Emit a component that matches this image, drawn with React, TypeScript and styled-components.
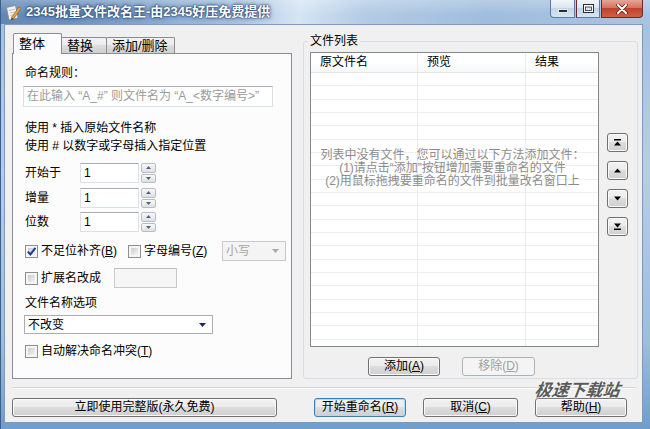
import React from 'react'
import styled, { createGlobalStyle } from 'styled-components'

const font = `'Liberation Sans', 'Noto Sans CJK SC', sans-serif`

const colors = {
  face: '#f0f0f0',
  panel: '#fcfcfc',
  tabBorder: '#898c95',
  button: '#707070',
  field: '#abadb3',
  hint: '#8c8c8c'
}

const buttonFace =
  'linear-gradient(180deg, #f2f2f2 0%, #ebebeb 49%, #dddddd 50%, #cfcfcf 100%)'

const GlobalStyle = createGlobalStyle`
  html, body {
    margin: 0;
    padding: 0;
    overflow: hidden;
    background: #ffffff;
  }
  * {
    box-sizing: border-box;
  }
`

const Window = styled.div`
  width: 650px;
  height: 429px;
  display: flex;
  flex-direction: column;
  font-family: ${font};
  font-size: 12px;
  color: #000;
  background: linear-gradient(180deg, #a3c0e0 0%, #b6cde7 40%, #9dbcdf 80%, #6f9dcc 100%);
  border-left: 1px solid #3d6089;
`

const TitleBar = styled.div`
  height: 24px;
  flex: none;
  display: flex;
  align-items: flex-start;
  background:
    linear-gradient(180deg, rgba(255, 255, 255, 0.25), rgba(255, 255, 255, 0) 60%),
    linear-gradient(100deg, #5f86b6 0%, #7b9fc9 18%, #a6c2e1 36%, #d6e5f3 46%, #b3cbe5 56%, #a0bddd 75%, #a9c4e1 100%);
`

const AppIcon = styled.svg`
  flex: none;
  margin: 4px 0 0 4px;
`

const TitleText = styled.div`
  margin: 4px 0 0 5px;
  font-weight: bold;
  font-size: 13px;
  line-height: 16px;
  color: #ffffff;
  text-shadow: 0 0 2px #1c3a63, 0 0 5px #27497a, 0 0 1px #14304f;
`

const CaptionGroup = styled.div`
  margin-left: auto;
  margin-right: 7px;
  display: flex;
`

const CaptionButton = styled.div<{ $w: number; $close?: boolean; $round?: string }>`
  width: ${p => p.$w}px;
  height: 18px;
  display: flex;
  align-items: center;
  justify-content: center;
  border: 1px solid ${p => (p.$close ? '#6b2a22' : '#5a7aa3')};
  border-top: none;
  border-radius: ${p => p.$round || '0'};
  background: ${p =>
    p.$close
      ? 'linear-gradient(180deg, #e6a597 0%, #d6735e 45%, #be442d 50%, #cf5f44 100%)'
      : 'linear-gradient(180deg, #f1f5fa 0%, #dbe6f2 45%, #c3d5e9 50%, #d8e5f2 100%)'};
  & + & {
    margin-left: ${p => (p.$close ? 1 : 0)}px;
    border-left: ${p => (p.$close ? '1px solid #6b2a22' : 'none')};
  }
`

const Client = styled.div`
  position: relative;
  flex: 1;
  margin: 0 7px 6px 3px;
  background: ${colors.face};
  border: 1px solid #7d99bb;
  display: flex;
  flex-direction: column;
`

const MainRow = styled.div`
  height: 354px;
  flex: none;
  display: flex;
  gap: 11px;
  padding: 8px 0 0 7px;
`

const LeftPane = styled.div`
  width: 280px;
  display: flex;
  flex-direction: column;
`

const TabStrip = styled.div`
  height: 20px;
  flex: none;
  display: flex;
  align-items: flex-end;
  padding-left: 1px;
`

const Tab = styled.div<{ $active?: boolean; $w: number }>`
  position: relative;
  width: ${p => p.$w}px;
  height: ${p => (p.$active ? 21 : 16)}px;
  margin-bottom: ${p => (p.$active ? -1 : 0)}px;
  margin-left: ${p => (p.$active ? 0 : -1)}px;
  z-index: ${p => (p.$active ? 1 : 0)};
  padding-left: 5px;
  border: 1px solid ${colors.tabBorder};
  border-bottom: none;
  border-radius: 2px 2px 0 0;
  background: ${p => (p.$active ? colors.panel : buttonFace)};
  font-size: 13px;
  line-height: ${p => (p.$active ? 19 : 15)}px;
  white-space: nowrap;
`

const TabPanel = styled.div`
  flex: 1;
  border: 1px solid ${colors.tabBorder};
  background: ${colors.panel};
  padding: 12px 0 0 12px;
  display: flex;
  flex-direction: column;
`

const TextLine = styled.div<{ $mt?: number }>`
  margin-top: ${p => p.$mt || 0}px;
  height: 14px;
  line-height: 14px;
  white-space: nowrap;
`

const TextField = styled.div<{ $w: number; $h?: number; $mt?: number; $ml?: number; $disabled?: boolean }>`
  flex: none;
  width: ${p => p.$w}px;
  height: ${p => p.$h || 20}px;
  margin-top: ${p => p.$mt || 0}px;
  margin-left: ${p => p.$ml || 0}px;
  padding-left: 3px;
  border: 1px solid ${p => (p.$disabled ? '#c9c9c9' : '#dbdfe6')};
  border-top-color: ${p => (p.$disabled ? '#bdbdbd' : colors.field)};
  background: ${p => (p.$disabled ? '#f6f6f6' : '#ffffff')};
  color: ${p => (p.$disabled ? '#a0a0a0' : '#000')};
  line-height: ${p => (p.$h || 20) - 2}px;
  white-space: nowrap;
  overflow: hidden;
`

const Placeholder = styled.span`
  color: #9a9a9a;
`

const Row = styled.div<{ $mt?: number; $h?: number }>`
  margin-top: ${p => p.$mt || 0}px;
  height: ${p => p.$h || 20}px;
  display: flex;
  align-items: center;
`

const FieldLabel = styled.div`
  width: 55px;
  line-height: 14px;
`

const Spinner = styled.div`
  width: 15px;
  height: 20px;
  margin-left: 2px;
  display: flex;
  flex-direction: column;
  gap: 1px;
`

const SpinButton = styled.div`
  flex: 1;
  display: flex;
  align-items: center;
  justify-content: center;
  border: 1px solid #b9bec6;
  border-radius: 2px;
  background: linear-gradient(180deg, #f8f8f8, #dfe1e4);
`

const CheckItem = styled.label<{ $w?: number }>`
  width: ${p => (p.$w ? `${p.$w}px` : 'auto')};
  flex: none;
  display: flex;
  align-items: center;
  line-height: 14px;
  white-space: nowrap;
`

const CheckBox = styled.span`
  width: 13px;
  height: 13px;
  margin-right: 3px;
  flex: none;
  display: flex;
  align-items: center;
  justify-content: center;
  border: 1px solid #8e8f8f;
  padding: 2px;
  background: linear-gradient(135deg, #c9ccd1, #f4f4f4) content-box, #f6f6f6;
`

const Key = styled.span`
  text-decoration: underline;
`

const Select = styled.div<{ $w: number; $h?: number; $mt?: number; $ml?: number; $disabled?: boolean }>`
  width: ${p => p.$w}px;
  height: ${p => p.$h || 20}px;
  margin-top: ${p => p.$mt || 0}px;
  margin-left: ${p => p.$ml || 0}px;
  flex: none;
  display: flex;
  align-items: center;
  justify-content: space-between;
  padding: 0 6px 0 3px;
  border: 1px solid ${p => (p.$disabled ? '#c9c9c9' : colors.field)};
  background: ${p => (p.$disabled ? '#f4f4f4' : '#ffffff')};
  color: ${p => (p.$disabled ? '#a6a6a6' : '#000')};
  line-height: 14px;
`

const Group = styled.fieldset`
  margin: 1px 0 0 0;
  padding: 0;
  width: 335px;
  height: 345px;
  min-width: 0;
  border: 1px solid #d5dfe5;
  border-radius: 3px;
`

const GroupTitle = styled.legend`
  margin-left: 4px;
  padding: 0 2px;
  font-size: 12px;
  line-height: 14px;
`

const GroupBody = styled.div`
  padding: 4px 0 0 6px;
  display: flex;
  flex-direction: column;
`

const ListRow = styled.div`
  display: flex;
  gap: 8px;
`

const ListView = styled.div`
  position: relative;
  width: 289px;
  height: 295px;
  border: 1px solid #828790;
  background: #ffffff;
  display: flex;
  flex-direction: column;
`

const ListHeader = styled.div`
  height: 20px;
  flex: none;
  display: flex;
  border-bottom: 1px solid #e5e5e5;
  background: linear-gradient(180deg, #ffffff 0%, #ffffff 50%, #f6f7f9 100%);
`

const Column = styled.div<{ $w?: number }>`
  width: ${p => (p.$w ? `${p.$w}px` : 'auto')};
  flex: ${p => (p.$w ? 'none' : 1)};
  border-right: 1px solid ${p => (p.$w ? '#e8ebef' : 'transparent')};
`

const HeaderCell = styled(Column)`
  padding-left: 9px;
  line-height: 19px;
`

const ListBody = styled.div`
  flex: 1;
  display: flex;
  background: repeating-linear-gradient(
    180deg,
    transparent 0,
    transparent 12.33px,
    #eeeeee 12.33px,
    #eeeeee 13.33px
  );
`

const EmptyNote = styled.div`
  position: absolute;
  top: 96px;
  left: 0;
  right: 0;
  padding-right: 4px;
  text-align: center;
  color: ${colors.hint};
  line-height: 13px;
  white-space: nowrap;
`

const ArrowColumn = styled.div`
  padding-top: 81px;
  display: flex;
  flex-direction: column;
  gap: 9px;
`

const ArrowButton = styled.div`
  width: 21px;
  height: 19px;
  display: flex;
  align-items: center;
  justify-content: center;
  border: 1px solid ${colors.button};
  border-radius: 3px;
  background: ${buttonFace};
  box-shadow: inset 0 0 0 1px #fbfbfb;
`

const GroupButtons = styled.div`
  margin-top: 10px;
  padding-left: 58px;
  display: flex;
  gap: 22px;
`

const Button = styled.button<{ $w: number; $default?: boolean }>`
  width: ${p => p.$w}px;
  height: 19px;
  padding: 0;
  font-family: ${font};
  font-size: 12px;
  line-height: 17px;
  color: #000;
  border: 1px solid ${p => (p.$default ? '#3c7fb1' : colors.button)};
  border-radius: 3px;
  background: ${buttonFace};
  box-shadow: inset 0 0 0 1px ${p => (p.$default ? '#a9dcf5' : '#fbfbfb')};
  white-space: nowrap;
  &:disabled {
    color: #a0a0a0;
    border-color: #adb2b5;
    background: #f4f4f4;
    box-shadow: none;
  }
`

const Separator = styled.div`
  margin: 8px 6px 0 7px;
  height: 2px;
  border-top: 1px solid #d5d5d5;
  border-bottom: 1px solid #ffffff;
`

const BottomBar = styled.div`
  margin-top: 9px;
  padding: 0 15px 0 7px;
  display: flex;
  justify-content: space-between;
`

const BottomRight = styled.div`
  display: flex;
  gap: 17px;
`

const Watermark = styled.div`
  position: absolute;
  left: 530px;
  top: 354px;
  font-family: 'Noto Sans CJK SC', sans-serif;
  font-size: 17px;
  font-weight: bold;
  font-style: italic;
  line-height: 20px;
  color: #5a5a5a;
  text-shadow: 0 0 2px #ffffff, 0 0 2px #ffffff;
  transform: skewX(-8deg);
`

const TriUp = () => (
  <svg width="5" height="3" viewBox="0 0 5 3">
    <polygon points="2.5,0 5,3 0,3" fill="#4d6185" />
  </svg>
)

const TriDown = () => (
  <svg width="5" height="3" viewBox="0 0 5 3">
    <polygon points="0,0 5,0 2.5,3" fill="#4d6185" />
  </svg>
)

const SpinBox: React.FC<{ label: string }> = ({ label }) => (
  <>
    <FieldLabel>{label}</FieldLabel>
    <TextField $w={59}>1</TextField>
    <Spinner>
      <SpinButton>
        <TriUp />
      </SpinButton>
      <SpinButton>
        <TriDown />
      </SpinButton>
    </Spinner>
  </>
)

const Check: React.FC<{ checked?: boolean; w?: number; children: React.ReactNode }> = ({
  checked,
  w,
  children
}) => (
  <CheckItem $w={w}>
    <CheckBox>
      {checked && (
        <svg width="9" height="9" viewBox="0 0 9 9" style={{ overflow: 'visible' }}>
          <path d="M0.8 4.6 L3.4 7.4 L8.4 0.8" stroke="#1b3f8f" strokeWidth="2" fill="none" />
        </svg>
      )}
    </CheckBox>
    {children}
  </CheckItem>
)

const DropArrow: React.FC<{ color: string }> = ({ color }) => (
  <svg width="7" height="4" viewBox="0 0 7 4">
    <polygon points="0,0 7,0 3.5,4" fill={color} />
  </svg>
)

const MoveIcon: React.FC<{ kind: 'top' | 'up' | 'down' | 'bottom' }> = ({ kind }) => (
  <svg width="9" height="9" viewBox="0 0 9 9">
    {kind === 'top' && (
      <>
        <rect x="1" y="1" width="7" height="1.5" fill="#000" />
        <polygon points="4.5,3.5 8,7.5 1,7.5" fill="#000" />
      </>
    )}
    {kind === 'up' && <polygon points="4.5,2.5 8,6.5 1,6.5" fill="#000" />}
    {kind === 'down' && <polygon points="1,2.5 8,2.5 4.5,6.5" fill="#000" />}
    {kind === 'bottom' && (
      <>
        <polygon points="1,1.5 8,1.5 4.5,5.5" fill="#000" />
        <rect x="1" y="6.5" width="7" height="1.5" fill="#000" />
      </>
    )}
  </svg>
)

const App: React.FC = () => (
  <>
    <GlobalStyle />
    <Window>
      <TitleBar>
        <AppIcon width="16" height="17" viewBox="0 0 16 17">
          <path d="M1.5 3.5 L10.5 1.5 L13 14 L4 16 Z" fill="#f6f6f6" stroke="#7f8793" strokeWidth="0.8" />
          <path d="M4 6.5 L10 5.2 M4.6 9 L10.6 7.7 M5.2 11.5 L11.2 10.2" stroke="#a9b3c2" strokeWidth="0.8" />
          <path d="M6.5 13.5 L14 3 L16 4.5 L8.5 15 Z" fill="#e9a338" stroke="#8e5312" strokeWidth="0.6" />
          <path d="M6.5 13.5 L8.5 15 L6 16.5 Z" fill="#3a3a3a" />
        </AppIcon>
        <TitleText>2345批量文件改名王-由2345好压免费提供</TitleText>
        <CaptionGroup>
          <CaptionButton $w={25} $round="0 0 0 4px">
            <svg width="10" height="8" viewBox="0 0 10 8">
              <rect x="0.5" y="4.5" width="9" height="3" fill="#2b2b2b" stroke="#ffffff" strokeWidth="0.8" />
            </svg>
          </CaptionButton>
          <CaptionButton $w={24}>
            <svg width="11" height="9" viewBox="0 0 11 9">
              <rect x="0.5" y="0.5" width="10" height="8" fill="#ffffff" stroke="#2b2b2b" strokeWidth="1" />
              <rect x="2.5" y="3" width="6" height="3.5" fill="#dce6f1" stroke="#2b2b2b" strokeWidth="0.8" />
            </svg>
          </CaptionButton>
          <CaptionButton $w={42} $close $round="0 0 4px 0">
            <svg width="12" height="10" viewBox="0 0 12 10">
              <path d="M2 1 L10 9 M10 1 L2 9" stroke="#5a1a12" strokeWidth="3.4" strokeLinecap="round" />
              <path d="M2 1 L10 9 M10 1 L2 9" stroke="#ffffff" strokeWidth="2" strokeLinecap="round" />
            </svg>
          </CaptionButton>
        </CaptionGroup>
      </TitleBar>

      <Client>
        <MainRow>
          <LeftPane>
            <TabStrip>
              <Tab $active $w={49}>整体</Tab>
              <Tab $w={46}>替换</Tab>
              <Tab $w={69}>添加/删除</Tab>
            </TabStrip>
            <TabPanel>
              <TextLine>命名规则：</TextLine>
              <TextField $w={250} $h={21} $mt={6} $ml={-2}>
                <Placeholder>在此输入 “A_#” 则文件名为 “A_&lt;数字编号&gt;”</Placeholder>
              </TextField>
              <TextLine $mt={14}>使用 * 插入原始文件名称</TextLine>
              <TextLine $mt={4}>使用 # 以数字或字母插入指定位置</TextLine>
              <Row $mt={10}>
                <SpinBox label="开始于" />
              </Row>
              <Row $mt={5}>
                <SpinBox label="增量" />
              </Row>
              <Row $mt={4}>
                <SpinBox label="位数" />
              </Row>
              <Row $mt={9}>
                <Check checked w={103}>
                  不足位补齐(<Key>B</Key>)
                </Check>
                <Check w={94}>
                  字母编号(<Key>Z</Key>)
                </Check>
                <Select $w={64} $disabled>
                  小写
                  <DropArrow color="#a9a9a9" />
                </Select>
              </Row>
              <Row $mt={7}>
                <Check w={89}>扩展名改成</Check>
                <TextField $w={63} $disabled />
              </Row>
              <TextLine $mt={8}>文件名称选项</TextLine>
              <Select $w={189} $h={19} $mt={5} $ml={-1}>
                不改变
                <DropArrow color="#1d2b5c" />
              </Select>
              <Row $mt={10} $h={14}>
                <Check>
                  自动解决命名冲突(<Key>T</Key>)
                </Check>
              </Row>
            </TabPanel>
          </LeftPane>

          <Group>
            <GroupTitle>文件列表</GroupTitle>
            <GroupBody>
              <ListRow>
                <ListView>
                  <ListHeader>
                    <HeaderCell $w={107}>原文件名</HeaderCell>
                    <HeaderCell $w={108}>预览</HeaderCell>
                    <HeaderCell>结果</HeaderCell>
                  </ListHeader>
                  <ListBody>
                    <Column $w={107} />
                    <Column $w={108} />
                    <Column />
                  </ListBody>
                  <EmptyNote>
                    列表中没有文件，您可以通过以下方法添加文件：
                    <br />
                    (1)请点击“添加”按钮增加需要重命名的文件
                    <br />
                    (2)用鼠标拖拽要重命名的文件到批量改名窗口上
                  </EmptyNote>
                </ListView>
                <ArrowColumn>
                  <ArrowButton>
                    <MoveIcon kind="top" />
                  </ArrowButton>
                  <ArrowButton>
                    <MoveIcon kind="up" />
                  </ArrowButton>
                  <ArrowButton>
                    <MoveIcon kind="down" />
                  </ArrowButton>
                  <ArrowButton>
                    <MoveIcon kind="bottom" />
                  </ArrowButton>
                </ArrowColumn>
              </ListRow>
              <GroupButtons>
                <Button $w={72}>
                  添加(<Key>A</Key>)
                </Button>
                <Button $w={73} disabled>
                  移除(<Key>D</Key>)
                </Button>
              </GroupButtons>
            </GroupBody>
          </Group>
        </MainRow>

        <Separator />

        <BottomBar>
          <Button $w={265}>立即使用完整版(永久免费)</Button>
          <BottomRight>
            <Button $w={92} $default>
              开始重命名(<Key>R</Key>)
            </Button>
            <Button $w={95}>
              取消(<Key>C</Key>)
            </Button>
            <Button $w={92}>
              帮助(<Key>H</Key>)
            </Button>
          </BottomRight>
        </BottomBar>

        <Watermark>极速下载站</Watermark>
      </Client>
    </Window>
  </>
)

export default App
